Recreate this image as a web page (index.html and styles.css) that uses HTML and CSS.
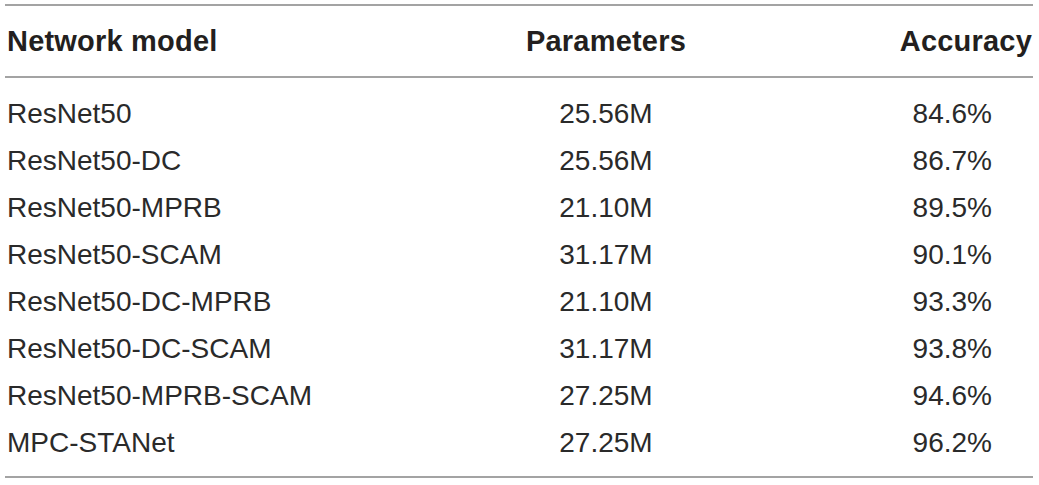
FILE: index.html
```html
<!DOCTYPE html>
<html>
<head>
<meta charset="utf-8">
<link rel="stylesheet" href="styles.css">
</head>
<body>
<div class="table">
  <div class="row head">
    <div class="c1">Network model</div>
    <div class="c2">Parameters</div>
    <div class="c3">Accuracy</div>
  </div>
  <div class="body">
    <div class="row"><div class="c1">ResNet50</div><div class="c2">25.56M</div><div class="c3">84.6%</div></div>
    <div class="row"><div class="c1">ResNet50-DC</div><div class="c2">25.56M</div><div class="c3">86.7%</div></div>
    <div class="row"><div class="c1">ResNet50-MPRB</div><div class="c2">21.10M</div><div class="c3">89.5%</div></div>
    <div class="row"><div class="c1">ResNet50-SCAM</div><div class="c2">31.17M</div><div class="c3">90.1%</div></div>
    <div class="row"><div class="c1">ResNet50-DC-MPRB</div><div class="c2">21.10M</div><div class="c3">93.3%</div></div>
    <div class="row"><div class="c1">ResNet50-DC-SCAM</div><div class="c2">31.17M</div><div class="c3">93.8%</div></div>
    <div class="row"><div class="c1">ResNet50-MPRB-SCAM</div><div class="c2">27.25M</div><div class="c3">94.6%</div></div>
    <div class="row"><div class="c1">MPC-STANet</div><div class="c2">27.25M</div><div class="c3">96.2%</div></div>
  </div>
</div>
</body>
</html>
```

FILE: styles.css
```css
html, body {
  margin: 0;
  padding: 0;
  background: #ffffff;
}
body {
  font-family: "Liberation Sans", Arial, Helvetica, sans-serif;
  font-size: 28px;
  color: #2a2a2a;
}
.table {
  margin: 4px 0 0 5px;
  width: 1028px;
  border-top: 2px solid #a3a3a3;
  border-bottom: 2px solid #a3a3a3;
}
.row {
  display: grid;
  grid-template-columns: 400px 402px 1fr;
  align-items: center;
  height: 47.14px;
  line-height: 1;
}
.head {
  height: 70px;
  font-weight: bold;
  font-size: 29px;
  letter-spacing: 0.2px;
  color: #231f20;
  border-bottom: 2px solid #a3a3a3;
}
.body {
  padding: 12px 0 9px;
}
.c1 {
  padding-left: 2px;
}
.c2 {
  text-align: center;
}
.c3 {
  text-align: right;
  padding-right: 41px;
}
.head .c3 {
  padding-right: 1px;
}
```
